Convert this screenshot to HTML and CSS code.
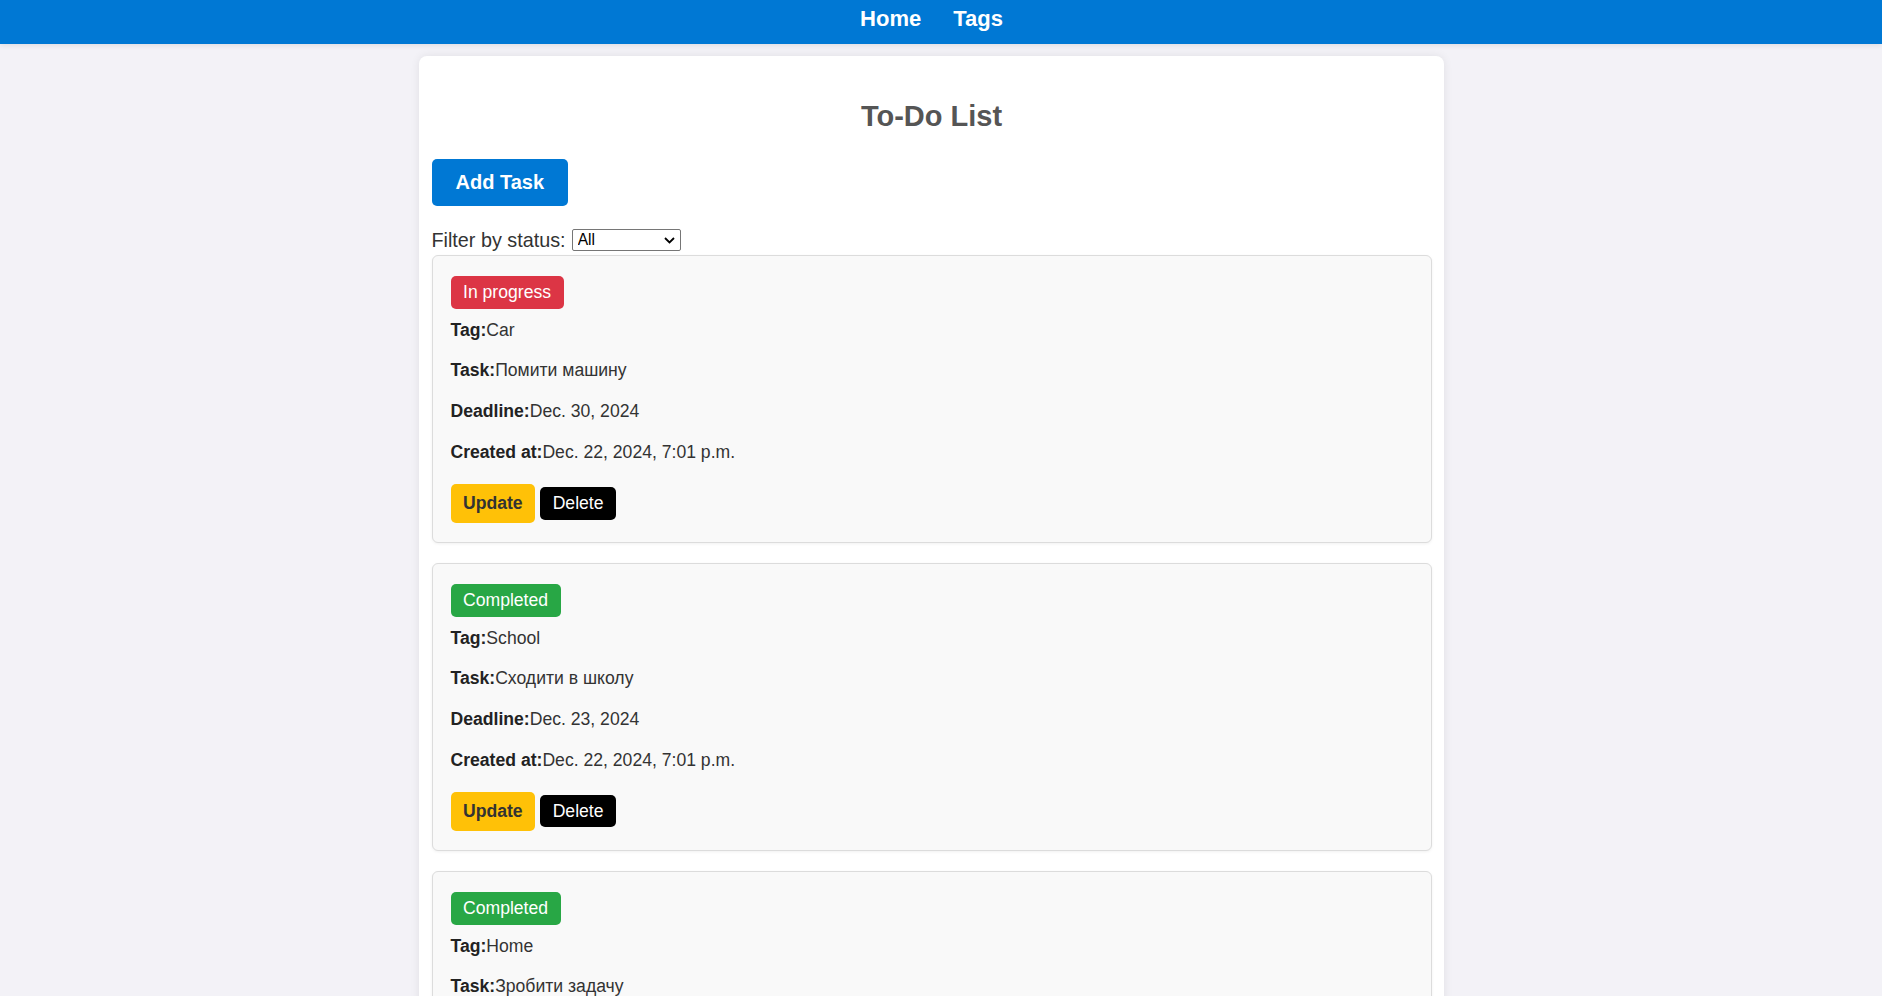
FILE: index.html
```html
<!DOCTYPE html>
<html lang="en">
<head>
<meta charset="utf-8">
<title>To-Do List</title>
<link rel="stylesheet" href="styles.css">
</head>
<body>
<header class="topbar">
  <nav class="nav">
    <a class="nav-link" href="#">Home</a>
    <a class="nav-link" href="#">Tags</a>
  </nav>
</header>
<main class="page">
  <section class="container">
    <h1 class="title">To-Do List</h1>
    <a class="btn-add" href="#">Add Task</a>
    <form class="filter">
      <label class="filter-label" for="status">Filter by status:</label>
      <span class="select-wrap">
        <select class="filter-select" id="status">
          <option>All</option>
          <option>In progress</option>
          <option>Completed</option>
        </select>
        <svg class="select-arrow" width="11" height="7" viewBox="0 0 11 7" aria-hidden="true"><path d="M1 1 L5.5 5.5 L10 1" fill="none" stroke="#000" stroke-width="1.8"/></svg>
      </span>
    </form>

    <article class="card">
      <div class="badge-row"><span class="badge badge-progress">In progress</span></div>
      <p class="field"><strong>Tag:</strong>Car</p>
      <p class="field"><strong>Task:</strong>Помити машину</p>
      <p class="field"><strong>Deadline:</strong>Dec. 30, 2024</p>
      <p class="field"><strong>Created at:</strong>Dec. 22, 2024, 7:01 p.m.</p>
      <div class="actions">
        <a class="btn-update" href="#">Update</a>
        <a class="btn-delete" href="#">Delete</a>
      </div>
    </article>

    <article class="card">
      <div class="badge-row"><span class="badge badge-done">Completed</span></div>
      <p class="field"><strong>Tag:</strong>School</p>
      <p class="field"><strong>Task:</strong>Сходити в школу</p>
      <p class="field"><strong>Deadline:</strong>Dec. 23, 2024</p>
      <p class="field"><strong>Created at:</strong>Dec. 22, 2024, 7:01 p.m.</p>
      <div class="actions">
        <a class="btn-update" href="#">Update</a>
        <a class="btn-delete" href="#">Delete</a>
      </div>
    </article>

    <article class="card">
      <div class="badge-row"><span class="badge badge-done">Completed</span></div>
      <p class="field"><strong>Tag:</strong>Home</p>
      <p class="field"><strong>Task:</strong>Зробити задачу</p>
      <p class="field"><strong>Deadline:</strong>Dec. 24, 2024</p>
      <p class="field"><strong>Created at:</strong>Dec. 22, 2024, 7:02 p.m.</p>
      <div class="actions">
        <a class="btn-update" href="#">Update</a>
        <a class="btn-delete" href="#">Delete</a>
      </div>
    </article>
  </section>
</main>
</body>
</html>
```

FILE: styles.css
```css
* {
  box-sizing: border-box;
}

html, body {
  margin: 0;
  padding: 0;
}

body {
  background: #f3f2f7;
  font-family: "Liberation Sans", Arial, sans-serif;
  color: #333;
}

.topbar {
  height: 44px;
  background: #0078d4;
  box-shadow: 0 2px 5px rgba(0, 0, 0, 0.08);
  display: flex;
  justify-content: center;
  align-items: flex-start;
  padding-top: 6px;
  padding-right: 19px;
}

.nav {
  display: flex;
  gap: 32px;
}

.nav-link {
  color: #fff;
  font-weight: bold;
  font-size: 22px;
  text-decoration: none;
  line-height: 25px;
}

.page {
  display: flex;
  justify-content: center;
  padding: 12px 19px 40px 0;
}

.container {
  width: 1025px;
  background: #fff;
  border-radius: 8px;
  box-shadow: 0 0 10px rgba(0, 0, 0, 0.08);
  padding: 20px 12.5px 20px;
}

.title {
  margin: 24px 0 25.7px;
  text-align: center;
  font-size: 29px;
  font-weight: bold;
  color: #555;
  line-height: 33.3px;
}

.btn-add {
  display: inline-block;
  background: #0078d4;
  color: #fff;
  font-weight: bold;
  font-size: 20px;
  line-height: 22.7px;
  padding: 12px 24px;
  border-radius: 5px;
  text-decoration: none;
}

.filter {
  display: flex;
  align-items: center;
  gap: 6px;
  margin: 23px 0 3.6px;
}

.filter-label {
  font-size: 19.8px;
  line-height: 22.8px;
  color: #333;
}

.select-wrap {
  position: relative;
  display: inline-flex;
}

.filter-select {
  appearance: none;
  -webkit-appearance: none;
  width: 109px;
  height: 22px;
  font-family: "Liberation Sans", Arial, sans-serif;
  font-size: 15.6px;
  line-height: 20px;
  border: 1px solid #767676;
  border-radius: 2px;
  background: #fff;
  color: #000;
  padding: 0 20px 0 5px;
}

.select-arrow {
  position: absolute;
  right: 6px;
  top: 8px;
  pointer-events: none;
}

.card {
  background: #f9f9f9;
  border: 1px solid #dcdcdc;
  border-radius: 6px;
  box-shadow: 0 1px 3px rgba(0, 0, 0, 0.06);
  padding: 20px 18px 19px;
  margin-bottom: 20px;
  font-size: 17.6px;
}

.badge-row {
  margin-bottom: 9.8px;
  height: 33px;
}

.badge {
  display: inline-block;
  color: #fff;
  font-size: 17.6px;
  line-height: 21px;
  padding: 6px 12.5px;
  border-radius: 5px;
}

.badge-progress {
  background: #dc3545;
}

.badge-done {
  background: #28a745;
}

.field {
  margin: 0 0 17.6px;
  line-height: 23px;
  color: #333;
}

.field strong {
  color: #222;
}

.actions {
  display: flex;
  align-items: center;
  gap: 5px;
  margin-top: 20px;
}

.btn-update {
  display: inline-block;
  background: #ffc107;
  color: #333;
  font-weight: bold;
  font-size: 17.6px;
  line-height: 20.3px;
  padding: 9.5px 12.5px;
  border-radius: 5px;
  text-decoration: none;
}

.btn-delete {
  display: inline-block;
  background: #000;
  color: #fff;
  font-size: 17.6px;
  line-height: 20.4px;
  padding: 6px 12.5px;
  border-radius: 5px;
  text-decoration: none;
}
```
